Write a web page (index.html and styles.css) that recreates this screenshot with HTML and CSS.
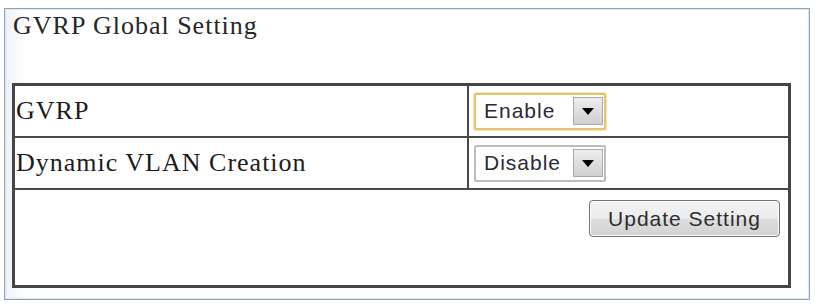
FILE: index.html
```html
<!DOCTYPE html>
<html>
<head>
<meta charset="utf-8">
<link rel="stylesheet" href="styles.css">
</head>
<body>
<div class="panel">
  <div class="title">GVRP Global Setting</div>
  <table class="grid">
    <tr class="row">
      <td class="label">GVRP</td>
      <td class="control">
        <div class="select focused">
          <span class="value">Enable</span>
          <span class="arrow"><svg width="12" height="7" viewBox="0 0 12 7"><path d="M0 0H12L6 7Z" fill="#000"/></svg></span>
        </div>
      </td>
    </tr>
    <tr class="row">
      <td class="label">Dynamic VLAN Creation</td>
      <td class="control">
        <div class="select">
          <span class="value">Disable</span>
          <span class="arrow"><svg width="12" height="7" viewBox="0 0 12 7"><path d="M0 0H12L6 7Z" fill="#000"/></svg></span>
        </div>
      </td>
    </tr>
    <tr class="row-last">
      <td class="actions" colspan="2">
        <button class="btn">Update Setting</button>
      </td>
    </tr>
  </table>
</div>
</body>
</html>
```
FILE: styles.css
```css
html, body {
  margin: 0;
  padding: 0;
  background: #ffffff;
}
body {
  width: 815px;
  height: 304px;
  overflow: hidden;
}
.panel {
  box-sizing: border-box;
  width: 806px;
  height: 292px;
  margin: 8px 0 0 4px;
  border: 1px solid #8fa4bb;
  box-shadow: inset 1px 1px 0 #dfe7f1, inset -1px -1px 0 #dfe7f1;
  background: linear-gradient(to right, #eef2f9 0, #ffffff 22px);
  padding: 2px 0 0 7px;
}
.title {
  font-family: "Liberation Serif", "Times New Roman", serif;
  font-size: 26px;
  letter-spacing: 1px;
  line-height: 30px;
  color: #262626;
  margin: 0 0 42px 1px;
}
.grid {
  width: 779px;
  border-collapse: collapse;
  border: 3px solid #454545;
  background: #ffffff;
}
.grid td {
  border: 2px solid #4a4a4a;
  padding: 0;
}
.row td {
  height: 50px;
}
.label {
  width: 451px;
  font-family: "Liberation Serif", "Times New Roman", serif;
  font-size: 26px;
  letter-spacing: 1px;
  color: #1c1c1c;
  padding-left: 1px !important;
  vertical-align: middle;
}
.control {
  vertical-align: middle;
  padding-left: 5px !important;
}
.select {
  box-sizing: border-box;
  width: 132px;
  height: 37px;
  display: flex;
  align-items: center;
  justify-content: space-between;
  border: 2px solid #bcbcbc;
  border-radius: 2px;
  background: #ffffff;
}
.select.focused {
  border-color: #e4c46c;
  box-shadow: 0 0 0 1px #f6e6bf;
}
.value {
  font-family: "Liberation Sans", Arial, sans-serif;
  font-size: 21px;
  letter-spacing: 1px;
  color: #2a2a38;
  padding-left: 8px;
}
.arrow {
  box-sizing: border-box;
  width: 30px;
  height: 28px;
  margin-right: 1px;
  display: flex;
  align-items: center;
  justify-content: center;
  border: 1px solid #a9a9a9;
  background: linear-gradient(#eeeeee, #cfcfcf);
}
.row-last td {
  height: 85px;
}
.actions {
  text-align: right;
  vertical-align: top;
  padding: 10px 8px 0 0 !important;
}
.btn {
  box-sizing: border-box;
  width: 191px;
  height: 37px;
  border: 1px solid #737373;
  border-radius: 4px;
  background: linear-gradient(#f4f4f4 0, #ececec 50%, #dedede 51%, #d2d2d2 100%);
  box-shadow: inset 0 0 0 1px #fbfbfb;
  font-family: "Liberation Sans", Arial, sans-serif;
  font-size: 21px;
  letter-spacing: 1px;
  color: #2e2e2e;
  padding: 0;
  cursor: pointer;
}
```
